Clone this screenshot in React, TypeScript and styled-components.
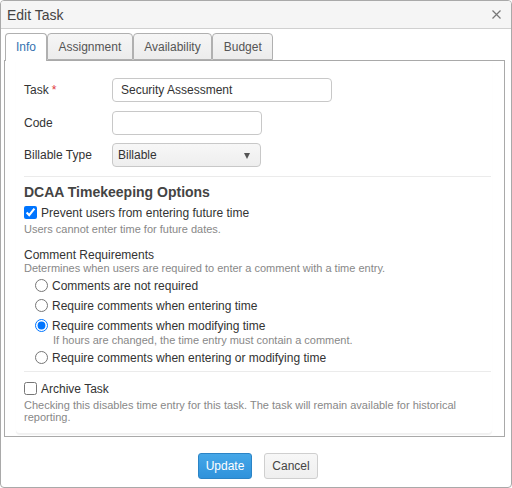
import React from "react";
import styled, { createGlobalStyle } from "styled-components";

const Global = createGlobalStyle`
  html, body { margin: 0; padding: 0; background: #ffffff; }
  body { font-family: "Liberation Sans", Arial, sans-serif; color: #333; }
  * { box-sizing: border-box; }
`;

const Dialog = styled.div`
  width: 512px;
  height: 488px;
  border: 1px solid #a9a9a9;
  border-radius: 4px;
  background: #fff;
  display: flex;
  flex-direction: column;
  overflow: hidden;
`;

const TitleBar = styled.div`
  height: 28px;
  flex: none;
  display: flex;
  align-items: center;
  justify-content: space-between;
  padding: 0 10px 0 6px;
  background: #f5f5f5;
  border-bottom: 1px solid #d0d0d0;
`;

const Title = styled.div`
  font-size: 14px;
  color: #444;
`;

const Close = styled.button`
  border: 0;
  background: transparent;
  padding: 0;
  width: 10px;
  height: 10px;
  display: flex;
  align-items: center;
  justify-content: center;
  cursor: pointer;
`;

const Body = styled.div`
  flex: 1;
  display: flex;
  flex-direction: column;
  padding: 4px 6px 0 3px;
`;

const TabList = styled.div`
  display: flex;
  padding-left: 1px;
  height: 27px;
  position: relative;
  z-index: 1;
`;

const Tab = styled.div<{ $active?: boolean }>`
  height: ${(p) => (p.$active ? "28px" : "27px")};
  padding: 0 ${(p) => (p.$active ? "10px" : "10.5px")};
  display: flex;
  align-items: center;
  font-size: 12px;
  color: ${(p) => (p.$active ? "#3572b0" : "#555")};
  background: ${(p) => (p.$active ? "#fff" : "linear-gradient(#f6f6f6, #ececec)")};
  border: 1px solid #b0b0b0;
  border-bottom: ${(p) => (p.$active ? "0" : "1px solid #b0b0b0")};
  border-radius: 4px 4px 0 0;
  padding-bottom: ${(p) => (p.$active ? "1px" : "0")};
`;

const Panel = styled.div`
  border: 1px solid #a9a9a9;
  height: 377px;
  padding: 0 12px 2px 11px;
  display: flex;
  flex-direction: column;
`;

const Card = styled.div`
  flex: 1;
  background: #fff;
  border-radius: 0 0 4px 4px;
  box-shadow: 0 1px 1px rgba(0, 0, 0, 0.06);
  border-bottom: 1px solid #f0f0f0;
  padding: 17px 1px 0 8px;
  display: flex;
  flex-direction: column;
`;

const FormRow = styled.div`
  display: flex;
  align-items: center;
  height: 24px;
  margin-bottom: 8.5px;
`;

const Label = styled.div`
  width: 88px;
  font-size: 12px;
  color: #333;
`;

const Required = styled.span`
  color: #e0383e;
  margin-left: 3px;
`;

const TextInput = styled.input<{ $w: number }>`
  width: ${(p) => p.$w}px;
  height: 24px;
  border: 1px solid #c8c8c8;
  border-radius: 4px;
  padding: 0 8px;
  font-family: "Liberation Sans", Arial, sans-serif;
  font-size: 12px;
  color: #333;
  outline: none;
`;

const Select = styled.div`
  width: 149px;
  height: 24px;
  border: 1px solid #c8c8c8;
  border-radius: 4px;
  padding: 0 10px 0 5px;
  background: linear-gradient(#f7f7f7, #eeeeee);
  display: flex;
  align-items: center;
  justify-content: space-between;
  font-size: 12px;
  color: #333;
`;

const Caret = styled.span`
  width: 0;
  height: 0;
  border-left: 3.5px solid transparent;
  border-right: 3.5px solid transparent;
  border-top: 6px solid #555;
  margin-top: 2px;
`;

const Separator = styled.div<{ $top: number }>`
  height: 1px;
  background: #ebebeb;
  margin-top: ${(p) => p.$top}px;
`;

const Heading = styled.div`
  font-size: 14px;
  font-weight: bold;
  color: #444;
  line-height: 17px;
  margin-top: 7px;
`;

const CheckRow = styled.label<{ $top: number }>`
  display: flex;
  align-items: center;
  gap: 4px;
  height: 16px;
  font-size: 12px;
  color: #333;
  margin-top: ${(p) => p.$top}px;
`;

const Box = styled.input`
  width: 13px;
  height: 13px;
  margin: 0;
  accent-color: #0075ff;
`;

const Hint = styled.div<{ $indent?: number; $top?: number; $bottom?: number }>`
  font-size: 11px;
  line-height: 12px;
  color: #888;
  padding-left: ${(p) => p.$indent ?? 0}px;
  margin-top: ${(p) => p.$top ?? 0}px;
  margin-bottom: ${(p) => p.$bottom ?? 0}px;
`;

const SubHeading = styled.div`
  font-size: 12px;
  line-height: 14px;
  color: #333;
  margin-top: 13px;
`;

const RadioGroup = styled.div`
  display: flex;
  flex-direction: column;
  padding-left: 11px;
  margin-top: 2px;
`;

const RadioRow = styled.label`
  display: flex;
  align-items: center;
  gap: 4px;
  height: 20px;
  font-size: 12px;
  color: #333;
`;

const Radio = styled.input`
  width: 13px;
  height: 13px;
  margin: 0;
  accent-color: #0075ff;
`;

const Footer = styled.div`
  flex: 1;
  display: flex;
  justify-content: center;
  align-items: flex-start;
  gap: 12px;
  padding: 16px 0 0 4px;
`;

const Button = styled.button<{ $primary?: boolean }>`
  width: 54px;
  height: 26px;
  border-radius: 3px;
  font-family: "Liberation Sans", Arial, sans-serif;
  font-size: 12px;
  padding: 0;
  cursor: pointer;
  color: ${(p) => (p.$primary ? "#fff" : "#444")};
  background: ${(p) =>
    p.$primary ? "linear-gradient(#45a7e8, #2f92db)" : "linear-gradient(#f7f7f7, #efefef)"};
  border: 1px solid ${(p) => (p.$primary ? "#2b84c6" : "#cfcfcf")};
`;

export default function App() {
  return (
    <>
      <Global />
      <Dialog>
        <TitleBar>
          <Title>Edit Task</Title>
          <Close aria-label="Close">
            <svg width="9" height="9" viewBox="0 0 9 9">
              <path d="M0.5 0.5 L8.5 8.5 M8.5 0.5 L0.5 8.5" stroke="#777" strokeWidth="1.2" />
            </svg>
          </Close>
        </TitleBar>
        <Body>
          <TabList>
            <Tab $active>Info</Tab>
            <Tab>Assignment</Tab>
            <Tab>Availability</Tab>
            <Tab>Budget</Tab>
          </TabList>
          <Panel>
            <Card>
              <FormRow>
                <Label>
                  Task<Required>*</Required>
                </Label>
                <TextInput $w={220} defaultValue="Security Assessment" />
              </FormRow>
              <FormRow>
                <Label>Code</Label>
                <TextInput $w={150} defaultValue="" />
              </FormRow>
              <FormRow>
                <Label>Billable Type</Label>
                <Select>
                  <span>Billable</span>
                  <Caret />
                </Select>
              </FormRow>
              <Separator $top={0} />
              <Heading>DCAA Timekeeping Options</Heading>
              <CheckRow $top={4}>
                <Box type="checkbox" defaultChecked />
                Prevent users from entering future time
              </CheckRow>
              <Hint $top={2}>Users cannot enter time for future dates.</Hint>
              <SubHeading>Comment Requirements</SubHeading>
              <Hint>Determines when users are required to enter a comment with a time entry.</Hint>
              <RadioGroup>
                <RadioRow>
                  <Radio type="radio" name="cr" />
                  Comments are not required
                </RadioRow>
                <RadioRow>
                  <Radio type="radio" name="cr" />
                  Require comments when entering time
                </RadioRow>
                <RadioRow>
                  <Radio type="radio" name="cr" defaultChecked />
                  Require comments when modifying time
                </RadioRow>
                <Hint $indent={18} $top={-2} $bottom={2}>
                  If hours are changed, the time entry must contain a comment.
                </Hint>
                <RadioRow>
                  <Radio type="radio" name="cr" />
                  Require comments when entering or modifying time
                </RadioRow>
              </RadioGroup>
              <Separator $top={3} />
              <CheckRow $top={9}>
                <Box type="checkbox" />
                Archive Task
              </CheckRow>
              <Hint $top={2}>
                Checking this disables time entry for this task. The task will remain available for historical
                reporting.
              </Hint>
            </Card>
          </Panel>
        </Body>
        <Footer>
          <Button $primary>Update</Button>
          <Button>Cancel</Button>
        </Footer>
      </Dialog>
    </>
  );
}
